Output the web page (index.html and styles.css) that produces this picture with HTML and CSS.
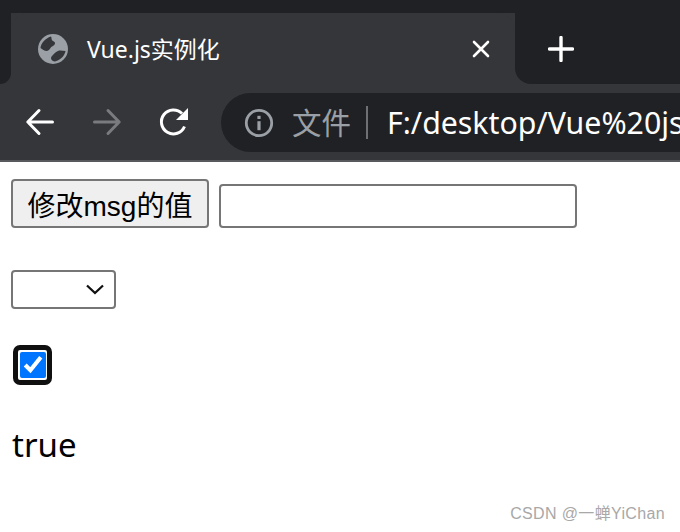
FILE: index.html
```html
<!DOCTYPE html>
<html lang="zh">
<head>
<meta charset="utf-8">
<title>Vue.js实例化</title>
<link rel="stylesheet" href="styles.css">
</head>
<body>
<header class="chrome">
  <div class="tabstrip">
    <div class="strip-edge strip-left"></div>
    <div class="tab">
      <svg class="globe" viewBox="0 0 30 30"><circle cx="15" cy="15" r="15" fill="#9aa0a6"/><path d="M2.5 14 C3 9 7 4.5 13 2.5 C14 4 13 6 15 7 C17.5 8 18 10 15 12 C12 13 12.5 16 9 17 C6 17 4.5 15 2.5 14 Z M27.5 17 C27 21 23 26 17 27.5 C13 27 12 24 14 22 C16 20 17 18 20 17 C22 16 25 17 27.5 17 Z" fill="#35363a"/></svg>
      <span class="tab-title">Vue.js实例化</span>
      <svg class="tab-close" viewBox="0 0 18 18"><path d="M2 2 L16 16 M16 2 L2 16" stroke="#fff" stroke-width="2.6" stroke-linecap="round"/></svg>
    </div>
    <div class="strip-edge strip-right">
      <svg class="new-tab" viewBox="0 0 26 26"><path d="M13 1.5 V24.5 M1.5 13 H24.5" stroke="#fff" stroke-width="3.4" stroke-linecap="round"/></svg>
    </div>
  </div>
  <div class="toolbar">
    <svg class="nav" viewBox="0 0 30 30"><path d="M27.5 15 H3 M14 3.5 L2.8 15 L14 26.5" fill="none" stroke="#fff" stroke-width="3" stroke-linecap="round" stroke-linejoin="round"/></svg>
    <svg class="nav nav-fwd" viewBox="0 0 30 30"><path d="M2.5 15 H27 M16 3.5 L27.2 15 L16 26.5" fill="none" stroke="#7a7b7e" stroke-width="3" stroke-linecap="round" stroke-linejoin="round"/></svg>
    <svg class="nav nav-reload" viewBox="0 0 30 30"><path d="M25.5 19.5 A12 12 0 1 1 23 6.5" fill="none" stroke="#fff" stroke-width="3"/><path d="M29 1 V13 H17 Z" fill="#fff"/></svg>
    <div class="omnibox">
      <svg class="info" viewBox="0 0 30 30"><circle cx="15" cy="15" r="12.7" fill="none" stroke="#9aa0a6" stroke-width="2.8"/><rect x="13.4" y="13.2" width="3.2" height="9" fill="#9aa0a6"/><rect x="13.4" y="7.8" width="3.2" height="3.2" fill="#9aa0a6"/></svg>
      <span class="scheme">文件</span>
      <span class="divider"></span>
      <span class="url">F:/desktop/Vue%20js</span>
    </div>
  </div>
  <div class="chrome-rule"></div>
</header>
<main class="page">
  <div class="row row-top">
    <button class="btn" type="button">修改msg的值</button>
    <input class="field" type="text">
  </div>
  <div class="row row-select">
    <select class="picker"><option></option></select>
  </div>
  <div class="row row-check">
    <span class="check-ring"><input class="check" type="checkbox" checked></span>
  </div>
  <p class="value">true</p>
</main>
<div class="watermark">CSDN @一蝉YiChan</div>
</body>
</html>
```
FILE: styles.css
```css
* { box-sizing: border-box; }
html, body { margin: 0; height: 100%; }
body {
  width: 680px;
  height: 532px;
  overflow: hidden;
  position: relative;
  background: #fff;
  font-family: "Noto Sans", "Noto Sans CJK SC", sans-serif;
}
.chrome { background: #35363a; display: flex; flex-direction: column; height: 162px; }
.tabstrip {
  display: flex;
  height: 84px;
  flex: none;
  background: linear-gradient(#202124 13px, #35363a 13px);
}
.strip-edge { background: #202124; display: flex; align-items: center; }
.strip-left { width: 11px; border-bottom-right-radius: 12px; }
.strip-right { flex: 1; border-bottom-left-radius: 16px; padding: 13px 0 0 33px; }
.tab {
  width: 504px;
  height: 71px;
  margin-top: 13px;
  background: #35363a;
  border-radius: 18px 18px 0 0;
  display: flex;
  align-items: center;
  padding: 0 25px 0 27px;
}
.globe { width: 30px; height: 30px; flex: none; margin-top: 1px; }
.tab-title {
  color: #fff;
  font-size: 23px;
  margin-left: 19px;
  flex: 1;
  line-height: 30px;
}
.tab-close { width: 18px; height: 18px; flex: none; }
.new-tab { width: 26px; height: 26px; }
.toolbar {
  display: flex;
  align-items: center;
  height: 76px;
  flex: none;
  padding: 0 0 0 25px;
  overflow: hidden;
}
.nav { width: 30px; height: 30px; flex: none; margin-right: 37px; }
.nav-reload { margin-right: 32px; }
.omnibox {
  flex: none;
  width: 500px;
  height: 59px;
  margin-top: 1px;
  background: #202124;
  border-radius: 30px 0 0 30px;
  display: flex;
  align-items: center;
  padding-left: 23px;
}
.info { width: 30px; height: 30px; flex: none; }
.scheme { color: #9aa0a6; font-size: 29.5px; margin-left: 18px; line-height: 40px; }
.divider { width: 2px; height: 33px; background: #6e7073; margin: 0 19px 0 15px; flex: none; }
.url { color: #fff; font-size: 30.3px; line-height: 40px; white-space: nowrap; }
.chrome-rule { height: 2px; background: #58595c; flex: none; }
.page { padding: 17px 11px 0; }
.row { display: flex; align-items: flex-end; }
.btn {
  width: 198px;
  height: 49px;
  padding: 0;
  background: #efefef;
  border: 2px solid #767676;
  border-radius: 4px;
  color: #000;
  font: 28px "Liberation Sans", "Noto Sans CJK SC", sans-serif;
}
.field {
  width: 358px;
  height: 44px;
  margin-left: 10px;
  background: #fff;
  border: 2px solid #767676;
  border-radius: 4px;
}
.row-select { margin-top: 42px; }
.picker {
  width: 105px;
  height: 39px;
  background: #fff;
  border: 2px solid #767676;
  border-radius: 4px;
  color: #000;
  appearance: none;
  background-image: url("data:image/svg+xml,%3Csvg xmlns='http://www.w3.org/2000/svg' width='18' height='11'%3E%3Cpath d='M1 1.5 L9 9 L17 1.5' fill='none' stroke='%23111' stroke-width='2.3'/%3E%3C/svg%3E");
  background-repeat: no-repeat;
  background-position: 73px 12px;
}
.row-check { margin-top: 36px; padding-left: 2px; }
.check-ring {
  display: flex;
  align-items: center;
  justify-content: center;
  width: 39px;
  height: 40px;
  border: 5px solid #101010;
  border-radius: 7px;
}
.check {
  width: 26px;
  height: 26px;
  margin: 0;
  accent-color: #0075ff;
}
.value {
  margin: 37px 0 0 1px;
  font-size: 33px;
  line-height: 45px;
  color: #000;
}
.watermark {
  position: absolute;
  right: 15px;
  bottom: 8px;
  color: #a8a8a8;
  font: 16px "Liberation Sans", "Noto Sans CJK SC", sans-serif;
  letter-spacing: 0.35px;
  line-height: 20px;
}
```
